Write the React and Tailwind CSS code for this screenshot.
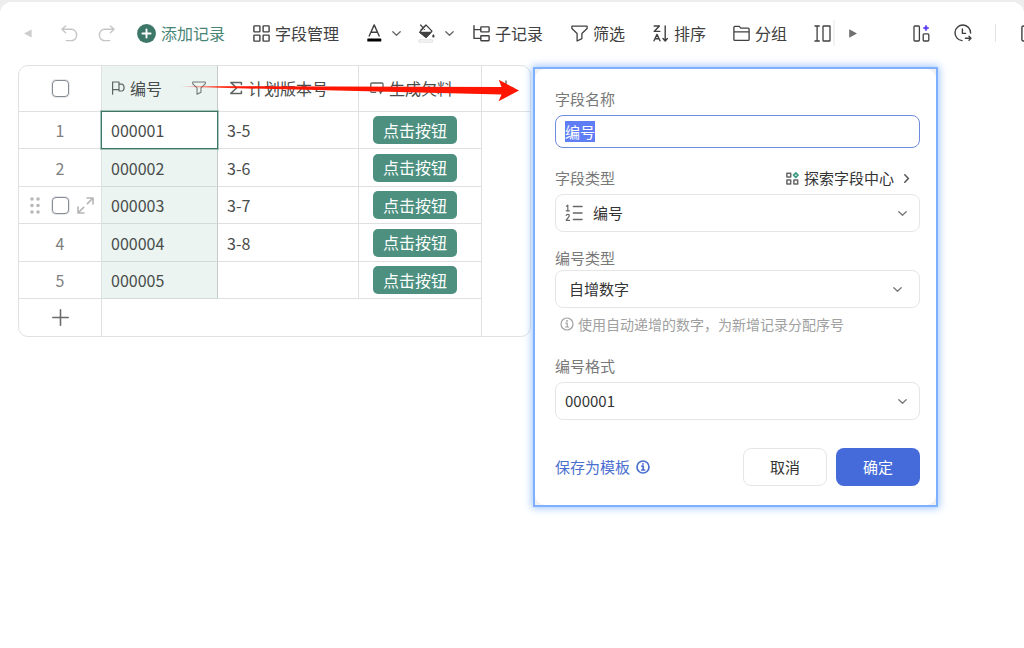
import { useEffect, useRef } from "react";

const svgBase = {
  fill: "none",
  stroke: "currentColor",
  strokeLinecap: "round",
  strokeLinejoin: "round",
  "aria-hidden": true,
};

function Chevron({ className = "" }) {
  return (
    <svg {...svgBase} strokeWidth="1.3" viewBox="0 0 9 9" className={`size-[9px] shrink-0 ${className}`}>
      <path d="M0.8 2.8 4.5 6.2 8.2 2.8" />
    </svg>
  );
}

function UndoIcon({ flip = false }) {
  return (
    <svg {...svgBase} strokeWidth="1.4" viewBox="0 0 17 17" className={flip ? "size-[17px] -scale-x-100" : "size-[17px]"}>
      <path d="M4.6 0.9 1 4.3 4.6 7.7M1.2 4.3H10.6A5 5.6 0 0 1 10.6 15.6H5.2" />
    </svg>
  );
}

function GridIcon() {
  return (
    <svg {...svgBase} strokeWidth="1.4" viewBox="0 0 17 17" className="size-[17px]">
      <rect x="0.9" y="0.9" width="6" height="6" rx="0.6" />
      <rect x="10.1" y="0.9" width="6" height="6" rx="0.6" />
      <rect x="0.9" y="10.1" width="6" height="6" rx="0.6" />
      <rect x="10.1" y="10.1" width="6" height="6" rx="0.6" />
    </svg>
  );
}

function FontColorIcon() {
  return (
    <svg {...svgBase} strokeWidth="1.4" viewBox="0 0 15 18" className="h-[18px] w-[15px]">
      <path d="M2.2 12 7.2 0.9 12.2 12M3.8 8.3H10.6" />
      <rect x="0.3" y="14.4" width="14" height="3.2" rx="0.6" fill="#000" stroke="none" />
    </svg>
  );
}

function BucketIcon() {
  return (
    <svg {...svgBase} strokeWidth="1.2" viewBox="0 0 17 19" className="h-[19px] w-[17px]">
      <path d="M1.8 8.2 8 1 14 7.2 8 13.4ZM2.6 1 6.6 5.4M6.8 1.8 2.8 6.2" />
      <path d="M2 8.4H13L8 13.4Z" fill="currentColor" />
      <path d="M15.4 10C16.2 11.1 16.6 11.6 16.6 12.3A1.2 1.2 0 0 1 14.2 12.3C14.2 11.6 14.6 11.1 15.4 10Z" fill="currentColor" stroke="none" />
      <rect x="1.4" y="15.9" width="13" height="2.2" fill="#fff" stroke="#d4d4d4" strokeWidth="0.8" />
    </svg>
  );
}

function TreeIcon() {
  return (
    <svg {...svgBase} strokeWidth="1.4" viewBox="0 0 17 17" className="size-[17px]">
      <path d="M1 0.8V13.4H7.6M1 4.6H7.6" />
      <rect x="7.8" y="1.9" width="8.3" height="5" rx="0.6" />
      <rect x="7.8" y="10.7" width="8.3" height="5" rx="0.6" />
    </svg>
  );
}

function FunnelIcon({ className = "size-[17px]" }) {
  return (
    <svg {...svgBase} strokeWidth="1.3" viewBox="0 0 17 17" className={className}>
      <path d="M0.9 1.2H16.1V3.6L10.9 8.4V13.6L6.1 16V8.4L0.9 3.6Z" />
    </svg>
  );
}

function SortIcon() {
  return (
    <svg {...svgBase} strokeWidth="1.4" viewBox="0 0 16 17" className="h-[17px] w-[16px]">
      <path d="M1.2 1H6.4L1.2 6.4H6.8M1 15.8 4 9.4 7 15.8M2.1 13.7H5.9M12.2 1V15.8M10 13.6 12.2 15.9 14.4 13.6" />
    </svg>
  );
}

function FolderIcon() {
  return (
    <svg {...svgBase} strokeWidth="1.3" viewBox="0 0 17 17" className="size-[17px]">
      <path d="M0.9 2.4A1 1 0 0 1 1.9 1.4H6.2L8 3.2H15.1A1 1 0 0 1 16.1 4.2V14.4A1 1 0 0 1 15.1 15.4H1.9A1 1 0 0 1 0.9 14.4ZM0.9 6.8H16.1" />
    </svg>
  );
}

function RowHeightIcon() {
  return (
    <svg {...svgBase} strokeWidth="1.3" viewBox="0 0 17 17" className="size-[17px]">
      <path d="M0.9 1H5.3M0.9 16H5.3M3.1 1V16" />
      <rect x="9" y="1" width="7" height="15" rx="0.4" />
    </svg>
  );
}

function LayoutIcon() {
  return (
    <svg {...svgBase} strokeWidth="1.3" viewBox="0 0 17 17" className="size-[17px]">
      <rect x="1" y="1" width="5.4" height="15" rx="0.9" />
      <rect x="10.2" y="8.8" width="5.6" height="7.2" rx="0.9" />
      <path d="M13 0 13.9 2.1 16 3 13.9 3.9 13 6 12.1 3.9 10 3 12.1 2.1Z" fill="#5b3df0" stroke="#5b3df0" strokeWidth="0.6" />
    </svg>
  );
}

function HistoryIcon() {
  return (
    <svg {...svgBase} strokeWidth="1.4" viewBox="0 0 18 18" className="size-[18px]">
      <path d="M8 16.6A7.8 7.8 0 1 1 16.6 9M8.4 5V9.4H11.6M11.4 14.2H17M15 12.2 17 14.2 15 16.2" />
    </svg>
  );
}

function InfoIcon({ className, strokeWidth = "1.2" }) {
  return (
    <svg {...svgBase} strokeWidth={strokeWidth} viewBox="0 0 14 14" className={className}>
      <circle cx="7" cy="7" r="6" />
      <path d="M5.9 6.2H7.2V10M5.7 10H8.6" />
      <circle cx="7" cy="3.9" r="0.9" fill="currentColor" stroke="none" />
    </svg>
  );
}

function ToolButton({ icon, label, className = "ml-7" }) {
  return (
    <button type="button" className={`flex shrink-0 items-center gap-[5px] whitespace-nowrap ${className}`}>
      {icon}
      <span>{label}</span>
    </button>
  );
}

function Toolbar() {
  return (
    <header className="flex h-[61px] items-center rounded-t-xl bg-white pt-px pl-6 text-[16px] leading-6 text-[#404040]">
      <button type="button" aria-label="向左滚动" className="shrink-0 text-[#cdcdcd]">
        <svg viewBox="0 0 8 9" fill="currentColor" className="h-[9px] w-2"><path d="M0 4.5 7.6 0.4V8.6Z" /></svg>
      </button>
      <button type="button" aria-label="撤销" className="ml-[29px] shrink-0 text-[#c6c6c6]"><UndoIcon /></button>
      <button type="button" aria-label="重做" className="ml-5 shrink-0 text-[#c6c6c6]"><UndoIcon flip /></button>
      <button type="button" className="ml-[22px] flex shrink-0 items-center gap-[5px] whitespace-nowrap text-[#4a8576]">
        <svg viewBox="0 0 19 19" className="size-[19px]" aria-hidden="true">
          <circle cx="9.5" cy="9.5" r="9.4" fill="#3c7767" />
          <path d="M9.5 5.4V13.6M5.4 9.5H13.6" stroke="#fff" strokeWidth="1.9" strokeLinecap="round" />
        </svg>
        <span>添加记录</span>
      </button>
      <ToolButton icon={<GridIcon />} label="字段管理" />
      <button type="button" aria-label="字体颜色" className="ml-7 flex shrink-0 items-center gap-[10px]">
        <FontColorIcon />
        <Chevron className="text-[#666]" />
      </button>
      <button type="button" aria-label="填充颜色" className="ml-[17px] flex shrink-0 items-center gap-[10px]">
        <BucketIcon />
        <Chevron className="text-[#666]" />
      </button>
      <ToolButton icon={<TreeIcon />} label="子记录" className="ml-[19px]" />
      <ToolButton icon={<FunnelIcon />} label="筛选" />
      <ToolButton icon={<SortIcon />} label="排序" />
      <ToolButton icon={<FolderIcon />} label="分组" className="ml-[27px]" />
      <button type="button" aria-label="行高" className="ml-[27px] flex h-[26px] shrink-0 items-center border-r-2 border-[#f3f3f3] pr-[2px]">
        <RowHeightIcon />
      </button>
      <button type="button" aria-label="向右滚动" className="ml-[14px] shrink-0 text-[#707070]">
        <svg viewBox="0 0 8 9" fill="currentColor" className="h-[9px] w-2"><path d="M8 4.5 0.2 0.2V8.8Z" /></svg>
      </button>
      <div className="ml-auto flex shrink-0 items-center">
        <button type="button" aria-label="字段布局"><LayoutIcon /></button>
        <button type="button" aria-label="历史记录" className="ml-6"><HistoryIcon /></button>
        <span className="ml-[23px] h-[18px] w-px bg-[#e2e2e2]" />
        <svg {...svgBase} strokeWidth="1.4" viewBox="0 0 3 17" className="ml-[25px] h-[17px] w-[3px]">
          <path d="M3 1H2.4A1.5 1.5 0 0 0 0.9 2.5V14.5A1.5 1.5 0 0 0 2.4 16H3" />
        </svg>
      </div>
    </header>
  );
}

const checkboxClass =
  "block size-[17px] shrink-0 appearance-none rounded-[4px] border border-[#868b95] bg-white ring-1 ring-[#868b95]/20";

function ColumnTitle({ icon, children }) {
  return (
    <span className="flex items-center gap-[5px] whitespace-nowrap">
      <span className="w-[14px] shrink-0 text-[#5f6462]">{icon}</span>
      {children}
    </span>
  );
}

const rows = [
  { id: 1, code: "000001", plan: "3-5" },
  { id: 2, code: "000002", plan: "3-6" },
  { id: 3, code: "000003", plan: "3-7" },
  { id: 4, code: "000004", plan: "3-8" },
  { id: 5, code: "000005", plan: "" },
];

function RecordTable() {
  return (
    <div className="w-[513px] overflow-hidden rounded-[10px] border border-[#e0e2e1]">
      <table className="w-full table-fixed border-separate border-spacing-0 text-[16px] leading-6 text-[#484c4b]">
        <colgroup>
          <col className="w-[83px]" />
          <col className="w-[116px]" />
          <col className="w-[141px]" />
          <col className="w-[123px]" />
          <col />
        </colgroup>
        <thead>
          <tr className="h-[46px] text-left">
            <th className="border-r border-b border-[#dfe1e0] p-0 pb-px font-normal">
              <input type="checkbox" aria-label="全选" className={`mx-auto ${checkboxClass}`} />
            </th>
            <th className="border-r border-b border-[#c3cbc8] bg-[#ebf4f1] p-0 pb-[2px] pl-[9px] font-normal">
              <div className="flex items-center justify-between pr-[11px]">
                <ColumnTitle
                  icon={
                    <svg {...svgBase} strokeWidth="1.2" viewBox="0 0 14 14" className="size-[14px]">
                      <path d="M1.6 13.2V1H8V8.6H1.6M8 3.2H10.6A2.2 3 0 0 1 10.6 10H8V8.6" />
                    </svg>
                  }
                >
                  编号
                </ColumnTitle>
                <button type="button" aria-label="筛选编号" className="text-[#6f7875]">
                  <FunnelIcon className="size-[14px]" />
                </button>
              </div>
            </th>
            <th className="border-r border-b border-[#dfe1e0] p-0 pb-[2px] pl-[11px] font-normal">
              <ColumnTitle
                icon={
                  <svg {...svgBase} strokeWidth="1.5" viewBox="0 0 14 14" className="size-[14px]">
                    <path d="M12.4 3.6V1.4H1.8L7.6 7 1.8 12.4H12.4V10.2" />
                  </svg>
                }
              >
                计划版本号
              </ColumnTitle>
            </th>
            <th className="border-r border-b border-[#dfe1e0] p-0 pb-[2px] pl-[11px] font-normal">
              <ColumnTitle
                icon={
                  <svg {...svgBase} strokeWidth="1.3" viewBox="0 0 14 14" className="size-[14px]">
                    <path d="M5.6 11.4H1.8A1 1 0 0 1 0.8 10.4V3A1 1 0 0 1 1.8 2H12A1 1 0 0 1 13 3V7" />
                    <path d="M8.8 8 13.4 9.6 11.4 10.6 10.6 12.6Z" fill="currentColor" />
                  </svg>
                }
              >
                生成欠料
              </ColumnTitle>
            </th>
            <th className="border-b border-[#dfe1e0] p-0 pb-[2px] font-normal">
              <button type="button" aria-label="新增字段" className="mx-auto block text-[#606462]">
                <svg {...svgBase} strokeWidth="1.4" viewBox="0 0 16 16" className="size-4">
                  <path d="M8 1V15M1 8H15" />
                </svg>
              </button>
            </th>
          </tr>
        </thead>
        <tbody>
          {rows.map((row) => (
            <tr key={row.id} className="odd:h-[37px] even:h-[38px]">
              <td className="border-r border-b border-[#dfe1e0] p-0 text-center text-[#808080]">
                {row.id === 3 ? (
                  <div className="flex items-center pl-[11px]">
                    <svg viewBox="0 0 10 17" fill="#b9b9b9" className="h-[17px] w-[10px]" aria-hidden="true">
                      <circle cx="2" cy="2" r="1.8" /><circle cx="8" cy="2" r="1.8" />
                      <circle cx="2" cy="8.5" r="1.8" /><circle cx="8" cy="8.5" r="1.8" />
                      <circle cx="2" cy="15" r="1.8" /><circle cx="8" cy="15" r="1.8" />
                    </svg>
                    <input type="checkbox" aria-label="选择记录 3" className={`ml-3 ${checkboxClass}`} />
                    <button type="button" aria-label="展开记录" className="ml-2 text-[#b5b5b5]">
                      <svg {...svgBase} strokeWidth="1.6" viewBox="0 0 17 17" className="size-[17px]">
                        <path d="M10 1H16V7M16 1 10.4 6.6M1 10V16H7M1 16 6.6 10.4" />
                      </svg>
                    </button>
                  </div>
                ) : (
                  row.id
                )}
              </td>
              <td
                className={
                  row.id === 1
                    ? "relative border-r border-b border-[#c3cbc8] bg-white p-0 pl-[9px]"
                    : "border-r border-b border-r-[#c3cbc8] border-b-[#d3dbd8] bg-[#ebf4f1] p-0 pl-[9px]"
                }
              >
                {row.code}
                {row.id === 1 && <span className="absolute -inset-px border border-[#3c7767] ring-1 ring-[#3c7767]/40" />}
              </td>
              <td className="border-r border-b border-[#dfe1e0] p-0 pl-[9px]">{row.plan}</td>
              <td className="border-r border-b border-[#dfe1e0] p-0 pl-[14px]">
                <button type="button" className="block h-7 w-[84px] rounded-[5px] bg-[#4d9080] pb-px text-white">
                  点击按钮
                </button>
              </td>
              <td className="p-0" />
            </tr>
          ))}
          <tr className="h-[37px]">
            <td className="border-r border-[#dfe1e0] p-0">
              <button type="button" aria-label="新增记录" className="mx-auto block text-[#6a6a6a]">
                <svg {...svgBase} strokeWidth="1.6" viewBox="0 0 17 17" className="size-[17px]">
                  <path d="M8.5 0.8V16.2M0.8 8.5H16.2" />
                </svg>
              </button>
            </td>
            <td colSpan={3} className="border-r border-[#dfe1e0] p-0" />
            <td className="p-0" />
          </tr>
        </tbody>
      </table>
    </div>
  );
}

const selectClass =
  "col-start-1 row-start-1 h-[38px] w-full appearance-none rounded-lg border border-[#e6e6e6] bg-white text-[#333] outline-none";
const labelClass = "text-[#787878]";
const caretClass = "pointer-events-none col-start-1 row-start-1 justify-self-end text-[#777]";

function FieldDialog() {
  const nameRef = useRef(null);
  useEffect(() => {
    nameRef.current.focus();
    nameRef.current.select();
  }, []);

  return (
    <section
      role="dialog"
      aria-label="编辑字段"
      className="absolute top-[67px] left-[533px] w-[405px] border-2 border-[#7db0ff] bg-[#f0f0f0] shadow-[0_0_8px_1px_rgba(120,175,255,0.75)]"
    >
      <form
        onSubmit={(e) => e.preventDefault()}
        className="flex flex-col rounded-[10px] bg-white pt-5 pr-4 pb-[19px] pl-5 text-[15px] leading-5"
      >
        <label htmlFor="field-name" className={labelClass}>字段名称</label>
        <input
          id="field-name"
          ref={nameRef}
          defaultValue="编号"
          className="mt-[6px] h-[33px] rounded-lg border border-[#6f8be0] bg-white px-[9px] leading-[25px] text-[#333] outline-none selection:bg-[#5f7ef5] selection:text-white"
        />

        <div className="mt-5 flex items-center justify-between">
          <label htmlFor="field-type" className={labelClass}>字段类型</label>
          <a href="#field-center" className="flex items-center pr-[9px] text-[#333]">
            <svg {...svgBase} strokeWidth="1.5" viewBox="0 0 13 13" className="size-[13px] text-[#666]">
              <rect x="0.9" y="1.3" width="3.8" height="3.8" />
              <rect x="0.9" y="8.1" width="3.8" height="3.8" />
              <rect x="7.9" y="8.1" width="3.8" height="3.8" />
              <path d="M9.8 0.9 12 3.1 9.8 5.3 7.6 3.1Z" stroke="#3f9c86" strokeWidth="1.7" />
            </svg>
            <span className="ml-[5px]">探索字段中心</span>
            <svg {...svgBase} strokeWidth="1.5" viewBox="0 0 9 9" className="ml-2 size-[9px] text-[#555]">
              <path d="M2.8 0.8 6.4 4.5 2.8 8.2" />
            </svg>
          </a>
        </div>
        <div className="mt-[6px] grid items-center">
          <select id="field-type" className={`${selectClass} pl-[37px]`}>
            <option>编号</option>
          </select>
          <svg {...svgBase} strokeWidth="1.5" viewBox="0 0 18 18" className="pointer-events-none col-start-1 row-start-1 ml-[10px] size-[18px] text-[#666]">
            <path d="M1.4 2.2 2.8 1.2V6.8M1.2 6.8H4.4M1.2 11.4C1.6 9.8 4.4 9.9 4.3 11.8C4.2 13.2 2 14.6 1.2 16.3H4.6" strokeWidth="1.2" />
            <path d="M8.4 2.5H17M8.4 9H17M8.4 15.5H17" />
          </svg>
          <Chevron className={`mr-[13px] ${caretClass}`} />
        </div>

        <label htmlFor="number-type" className={`mt-4 ${labelClass}`}>编号类型</label>
        <div className="mt-[2px] grid items-center">
          <select id="number-type" className={`${selectClass} pl-[13px]`}>
            <option>自增数字</option>
          </select>
          <Chevron className={`mr-[18px] ${caretClass}`} />
        </div>
        <p className="mt-[6px] flex items-center gap-1 pl-[5px] text-[14px] whitespace-nowrap text-[#a0a0a0]">
          <InfoIcon className="size-[14px] shrink-0" />
          使用自动递增的数字，为新增记录分配序号
        </p>

        <label htmlFor="number-format" className={`mt-[22px] ${labelClass}`}>编号格式</label>
        <div className="mt-[6px] grid items-center">
          <select id="number-format" className={`${selectClass} pl-[9px]`}>
            <option>000001</option>
          </select>
          <Chevron className={`mr-[13px] ${caretClass}`} />
        </div>

        <div className="mt-7 flex items-center gap-[9px]">
          <a href="#save-template" className="mr-auto flex items-center gap-[6px] text-[#4a6fd0]">
            保存为模板
            <InfoIcon className="size-[14px]" strokeWidth="1.7" />
          </a>
          <button type="button" className="h-[38px] w-[84px] rounded-lg border border-[#e6e6e6] bg-white text-[#333]">取消</button>
          <button type="submit" className="h-[38px] w-[84px] rounded-lg bg-[#456ad9] text-white">确定</button>
        </div>
      </form>
    </section>
  );
}

function Arrow() {
  return (
    <svg viewBox="0 0 340 24" className="pointer-events-none absolute top-[78px] left-[180px] h-6 w-[340px]" aria-hidden="true">
      <defs>
        <linearGradient id="arrow-fade" gradientUnits="userSpaceOnUse" x1="0" y1="0" x2="340" y2="0">
          <stop offset="0" stopColor="#ff1500" stopOpacity="0" />
          <stop offset="0.12" stopColor="#ff1500" stopOpacity="0.85" />
          <stop offset="0.2" stopColor="#ff1500" />
        </linearGradient>
      </defs>
      <path fill="url(#arrow-fade)" d="M0 8.1 321.5 8.9 318.8 1.8 339 12.6 318.6 23.2 321.5 16.6 0 8.8Z" />
    </svg>
  );
}

export default function App() {
  return (
    <div className="min-h-screen bg-[#ededed] pt-[2px] font-['Noto_Sans_CJK_SC',sans-serif]">
      <div className="min-h-[calc(100vh-2px)] rounded-t-xl bg-white">
        <Toolbar />
        <main className="pt-[2px] pl-[18px]">
          <RecordTable />
        </main>
      </div>
      <Arrow />
      <FieldDialog />
    </div>
  );
}
